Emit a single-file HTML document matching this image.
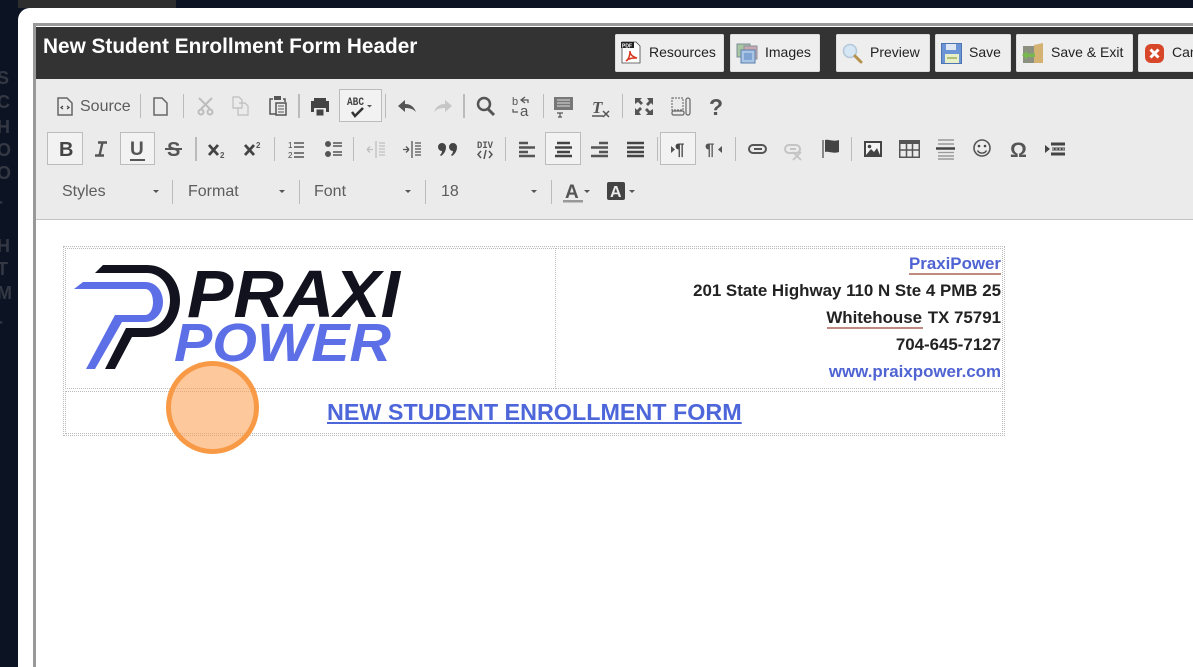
<!DOCTYPE html>
<html><head><meta charset="utf-8"><style>
html,body{margin:0;padding:0;width:1193px;height:667px;overflow:hidden;background:#0c1424;font-family:"Liberation Sans",sans-serif}
.a{position:absolute}
.t{position:absolute;white-space:nowrap;line-height:1}
.btn{position:absolute;top:34px;height:38px;background:#eee;border-radius:2px;box-shadow:inset 0 0 0 1px #ddd}
.bt{position:absolute;top:45px;font-size:14px;color:#222;line-height:1;white-space:nowrap}
.sep{position:absolute;width:1px;background:#bbb}
.box{position:absolute;background:#f2f2f2;border:1px solid #bcbcbc;box-sizing:border-box}
.l{position:absolute;left:-3px;font-size:18px;font-weight:bold;color:#343843;line-height:1}
.tb{position:absolute;font-size:16px;color:#5c5c5c;line-height:1;white-space:nowrap}
.r{position:absolute;right:192px;font-size:16.9px;font-weight:bold;color:#222;line-height:1;white-space:nowrap}
.d{position:absolute;border:1px dotted #bbb;box-sizing:border-box}
</style></head><body>
<div class="a" style="left:18px;top:0;width:158px;height:8px;background:#2e2e2e"></div>
<div class="l" style="top:69px">S</div><div class="l" style="top:93px">C</div><div class="l" style="top:118px">H</div><div class="l" style="top:141px">O</div><div class="l" style="top:164px">O</div><div class="l" style="top:192px">-</div><div class="l" style="top:237px">H</div><div class="l" style="top:260px">T</div><div class="l" style="top:284px">M</div><div class="l" style="top:312px">-</div>
<div class="a" style="left:18px;top:8px;width:1175px;height:659px;background:#fff;border-top-left-radius:12px"></div>
<div class="a" style="left:33px;top:23px;width:1160px;height:644px;background:#fff;border-left:3px solid #999;border-top:3px solid #999;box-sizing:border-box"></div>
<div class="a" style="left:36px;top:27px;width:1157px;height:52px;background:#333"></div>
<div class="t" style="left:43px;top:37px;font-size:20.8px;font-weight:bold;color:#fff">New Student Enrollment Form Header</div>

<div class="btn" style="left:615px;width:109px"></div>
<div class="btn" style="left:730px;width:90px"></div>
<div class="btn" style="left:836px;width:94px"></div>
<div class="btn" style="left:935px;width:76px"></div>
<div class="btn" style="left:1016px;width:117px"></div>
<div class="btn" style="left:1138px;width:70px"></div>
<div class="bt" style="left:649px">Resources</div>
<div class="bt" style="left:765px">Images</div>
<div class="bt" style="left:870px">Preview</div>
<div class="bt" style="left:969px">Save</div>
<div class="bt" style="left:1051px">Save &amp; Exit</div>
<div class="bt" style="left:1172px">Cancel</div>

<div class="a" style="left:36px;top:79px;width:1157px;height:141px;background:#ebebeb;border-bottom:1px solid #c4c4c4;box-sizing:border-box"></div>

<div class="box" style="left:339px;top:89px;width:43px;height:33px"></div>
<div class="box" style="left:47px;top:132px;width:36px;height:33px"></div>
<div class="box" style="left:120px;top:132px;width:35px;height:33px"></div>
<div class="box" style="left:545px;top:132px;width:36px;height:33px"></div>
<div class="box" style="left:660px;top:132px;width:36px;height:33px"></div>

<div class="tb" style="left:80px;top:99px">Source</div>
<div class="tb" style="left:62px;top:184px">Styles</div>
<div class="tb" style="left:188px;top:184px">Format</div>
<div class="tb" style="left:314px;top:184px">Font</div>
<div class="tb" style="left:441px;top:184px">18</div>

<div class="sep" style="left:140px;top:94px;height:24px"></div>
<div class="sep" style="left:183px;top:94px;height:24px"></div>
<div class="sep" style="left:298px;top:94px;height:24px;width:2px"></div>
<div class="sep" style="left:385px;top:94px;height:24px"></div>
<div class="sep" style="left:463px;top:94px;height:24px;width:2px"></div>
<div class="sep" style="left:543px;top:94px;height:24px"></div>
<div class="sep" style="left:622px;top:94px;height:24px"></div>
<div class="sep" style="left:195px;top:137px;height:24px;width:2px"></div>
<div class="sep" style="left:274px;top:137px;height:24px"></div>
<div class="sep" style="left:353px;top:137px;height:24px"></div>
<div class="sep" style="left:505px;top:137px;height:24px"></div>
<div class="sep" style="left:657px;top:137px;height:24px"></div>
<div class="sep" style="left:735px;top:137px;height:24px"></div>
<div class="sep" style="left:851px;top:137px;height:24px"></div>
<div class="sep" style="left:172px;top:180px;height:24px"></div>
<div class="sep" style="left:299px;top:180px;height:24px"></div>
<div class="sep" style="left:425px;top:180px;height:24px"></div>
<div class="sep" style="left:551px;top:180px;height:24px"></div>

<svg class="a" style="left:0;top:0" width="1193" height="230" viewBox="0 0 1193 230">
<!-- header button icons -->
<path d="M622 42h14l4 4v17h-18z" fill="#fff" stroke="#444" stroke-width=".8"/>
<rect x="621" y="42" width="13" height="6" fill="#222"/>
<text x="622" y="47.500" font-size="5" font-weight="bold" fill="#fff" font-family="Liberation Sans">PDF</text>
<path d="M626 61c3-2 4-6 4-10 0 4 3 6 7 7-4 0-8 0-11 3z" fill="none" stroke="#d8391f" stroke-width="1.500"/>
<rect x="737" y="44" width="13" height="13" fill="#a8c6a0" stroke="#7c8f9a"/>
<rect x="744" y="46" width="13" height="13" fill="#c8a8b0" stroke="#8c8f9a"/>
<rect x="741" y="50" width="14" height="13" fill="#a9c4e4" stroke="#5a7fae"/>
<rect x="744" y="53" width="8" height="7" fill="#7fa4d4"/>
<circle cx="850" cy="51" r="6.500" fill="#d5e6f5" stroke="#b4c8da" stroke-width="1.600"/>
<path d="M855 56l6 6" stroke="#b5914e" stroke-width="3" stroke-linecap="round"/>
<path d="M941.500 43.500h20v20h-20z" fill="#6b94d6" stroke="#4b74b0"/>
<rect x="946" y="44" width="10" height="6" fill="#dfe7f2"/>
<rect x="945" y="54" width="14" height="9" fill="#e7efc8"/>
<path d="M947 58h10" stroke="#9cb060" stroke-width="1.500"/>
<rect x="1023" y="46" width="14" height="17" fill="#8b9080"/>
<path d="M1034 45l9-2v20l-9 0z" fill="#d4b272"/>
<path d="M1022 55l5-4v2.500h8v3.500h-8v2.500z" fill="#78b84e"/>
<rect x="1145" y="44" width="19" height="19" rx="6" fill="#d9472b"/>
<path d="M1150.500 49.500l8 8m0-8l-8 8" stroke="#fff" stroke-width="3"/>

<!-- Row 1 -->
<g fill="none" stroke="#666" stroke-width="1.500">
<path d="M58 98h9l5 5v12H58z"/><path d="M63 106l-2 1.500 2 1.500m4-3l2 1.500-2 1.500" stroke-width="1.200" stroke="#444"/>
<path d="M154 98h8l5 5v12h-13z"/>
</g>
<g fill="none" stroke="#bdbdbd" stroke-width="2">
<path d="M199 98l11 11M212 98l-11 11"/><circle cx="201" cy="112" r="2.500"/><circle cx="210" cy="112" r="2.500"/>
<path stroke-width="1.200" d="M233 97h6l3 3v8h-9zM239 103h6l3 3v9h-10v-7"/>
</g>
<g fill="none" stroke="#555" stroke-width="1.500">
<path d="M273 99h-3v15h6"/><path d="M283 99h2v3"/><rect x="276" y="103" width="10" height="12"/>
<path d="M278 106h6M278 109h6M278 112h6" stroke-width="1"/>
</g>
<rect x="274" y="96" width="7" height="4" fill="#555"/>
<path d="M314 98h12v3h3v11h-3v-4h-12v4h-3v-11h3z" fill="#444"/><rect x="316" y="109" width="8" height="7" fill="#444" stroke="#ebebeb"/>
<text x="347" y="105" font-size="11" font-weight="bold" fill="#444" font-family="Liberation Mono" textLength="17" lengthAdjust="spacingAndGlyphs">ABC</text>
<path d="M352 112l3 4 8-8" fill="none" stroke="#333" stroke-width="2.500"/>
<path d="M367 105h5l-2.500 2.500z" fill="#555"/>
<path d="M398 106l7-6v4c6 0 9 3 11 8-3-3-6-4-11-4v4z" fill="#555"/>
<path d="M452 106l-7-6v4c-6 0-9 3-11 8 3-3 6-4 11-4v4z" fill="#c6c6c6"/>
<circle cx="484" cy="104" r="6" fill="none" stroke="#555" stroke-width="2.500"/><path d="M488 109l6 6" stroke="#555" stroke-width="3"/>
<text x="512" y="105" font-size="11" fill="#555" font-family="Liberation Sans">b</text>
<text x="520" y="116" font-size="15" fill="#555" font-family="Liberation Sans">a</text>
<path d="M521 100h7v3M525 97l-4 3 4 3M513 109v3h5" fill="none" stroke="#555" stroke-width="1.200"/>
<rect x="554" y="97" width="19" height="13" fill="#777"/>
<path d="M557 100h13M557 103h13M557 106h13" stroke="#ddd" stroke-width="1"/>
<path d="M557 113h6M560 113v4M558 117h4" stroke="#555" stroke-width="1.200" fill="none"/>
<text x="592" y="113" font-size="17" font-weight="bold" font-style="italic" fill="#555" font-family="Liberation Serif">T</text>
<path d="M592 116h11" stroke="#555" stroke-width="1.500"/><path d="M603 111l6 6m0-6l-6 6" stroke="#555" stroke-width="1.500"/>
<g fill="#555"><path d="M635 98h7l-2 2 3 3-2 2-3-3-3 2zM653 98v7l-2-2-3 3-2-2 3-3-2-3zM635 115v-7l2 2 3-3 2 2-3 3 2 3zM653 115h-7l2-2-3-3 2-2 3 3 3-2z"/></g>
<path d="M672 98h11v12h-11z" fill="none" stroke="#777" stroke-width="1.200" stroke-dasharray="2 1"/>
<rect x="672" y="111" width="12" height="4" rx="1.500" fill="none" stroke="#666" stroke-width="1.200"/>
<rect x="686" y="98" width="4" height="17" rx="2" fill="none" stroke="#666" stroke-width="1.200"/>
<text x="709" y="115" font-size="23" font-weight="bold" fill="#555" font-family="Liberation Sans">?</text>

<!-- Row 2 -->
<text x="59" y="156" font-size="20" font-weight="bold" fill="#444" font-family="Liberation Sans">B</text>
<path d="M98 142.500h9M95 155.500h9M102.500 142.500l-3 13" fill="none" stroke="#555" stroke-width="2.400"/>
<text x="130" y="155" font-size="19" font-weight="bold" fill="#555" font-family="Liberation Sans">U</text>
<rect x="130" y="159" width="15" height="2" fill="#555"/>
<text x="167" y="156" font-size="20" font-weight="bold" fill="#555" font-family="Liberation Sans">S</text>
<rect x="165" y="148" width="17" height="2" fill="#555"/>
<path d="M209 145l9 10m0-10l-9 10M245 145l9 10m0-10l-9 10" stroke="#444" stroke-width="2.800" fill="none"/>
<text x="220" y="158" font-size="8" font-weight="bold" fill="#555" font-family="Liberation Sans">2</text>
<text x="256" y="148" font-size="8" font-weight="bold" fill="#555" font-family="Liberation Sans">2</text>
<text x="288" y="148" font-size="8" fill="#444" font-family="Liberation Sans">1</text>
<text x="288" y="158" font-size="8" fill="#444" font-family="Liberation Sans">2</text>
<path d="M294 143h10M294 147h10M294 153h10M294 157h10" stroke="#555" stroke-width="1.600"/>
<circle cx="328" cy="144" r="3" fill="#555"/><circle cx="328" cy="154" r="3" fill="#555"/>
<path d="M333 143h9M333 146h9M333 152h9M333 155h9" stroke="#555" stroke-width="1.600"/>
<g stroke="#c0c0c0" stroke-width="1.300" fill="none"><path d="M376 141v17M379 143h6M379 146h6M379 149h6M379 152h6M379 155h6M367 149.500h6M367 149.500l3-3M367 149.500l3 3"/></g>
<g stroke="#555" stroke-width="1.300" fill="none"><path d="M412 141v17M415 143h6M415 146h6M415 149h6M415 152h6M415 155h6M403 149.500h6M409 149.500l-3-3M409 149.500l-3 3"/></g>
<path d="M438 147a4 4 0 0 1 8 0c0 4-2 7-5 9l-1-1c1-1 2-2 2-4a4 4 0 0 1-4-4zM449 147a4 4 0 0 1 8 0c0 4-2 7-5 9l-1-1c1-1 2-2 2-4a4 4 0 0 1-4-4z" fill="#444"/>
<text x="477" y="148" font-size="10" font-weight="bold" fill="#555" font-family="Liberation Mono" textLength="16" lengthAdjust="spacingAndGlyphs">DIV</text>
<path d="M481 151l-3 3.500 3 3.500M489 151l3 3.500-3 3.500M486 150l-2 9" stroke="#555" stroke-width="1.500" fill="none"/>
<g stroke="#555" stroke-width="2.500" fill="none">
<path d="M519 143h9M519 147.500h16M519 152h9M519 156h16"/>
<path d="M557 143h13M555 147.500h17M557 152h13M555 156h17" stroke="#444"/>
<path d="M599 143h9M591 147.500h17M599 152h9M591 156h17"/>
<path d="M627 143h17M627 147.500h17M627 152h17M627 156h17" stroke="#444"/>
</g>
<path d="M671 146l4 3.500-4 3.500z" fill="#555"/>
<text x="675" y="155" font-size="17" font-weight="bold" fill="#444" font-family="Liberation Sans">¶</text>
<text x="705" y="155" font-size="17" font-weight="bold" fill="#555" font-family="Liberation Sans">¶</text>
<path d="M722 146l-4 3.500 4 3.500z" fill="#555"/>
<rect x="749" y="145" width="17" height="8" rx="4" fill="none" stroke="#555" stroke-width="2"/><path d="M754 149h8" stroke="#555" stroke-width="2"/>
<rect x="785" y="145" width="15" height="8" rx="4" fill="none" stroke="#c4c4c4" stroke-width="2"/><path d="M790 149h6" stroke="#c4c4c4" stroke-width="2"/><path d="M793 152l8 8m0-8l-8 8" stroke="#c4c4c4" stroke-width="1.800"/>
<path d="M823 140v18" stroke="#666" stroke-width="1.500"/><path d="M825 140c4-1 8 2 14 0v12c-6 2-10-1-14 0z" fill="#444"/>
<rect x="864" y="141" width="18" height="16" fill="#444"/><rect x="866" y="143" width="14" height="12" fill="#f4f4f4"/><circle cx="869.500" cy="146.500" r="1.800" fill="#444"/><path d="M866 155l5-6 3 3 3-4 3 7z" fill="#444"/>
<rect x="899" y="140" width="21" height="18" fill="#555"/>
<path d="M900.500 144h18v12.500h-18z" fill="#ebebeb"/><path d="M906.500 144v13M912.500 144v13M900 150h19" stroke="#555" stroke-width="1.500"/>
<path d="M938 140h16M938 144h16M938 156h16M938 159h16" stroke="#888" stroke-width="1.300"/><path d="M936 148.500h19" stroke="#444" stroke-width="2.500"/><path d="M938 152.500h16" stroke="#999" stroke-width="1.300"/>
<circle cx="982" cy="148" r="8" fill="none" stroke="#555" stroke-width="1.600"/><circle cx="979" cy="146" r="1.300" fill="#444"/><circle cx="985" cy="146" r="1.300" fill="#444"/><path d="M977.500 150.500c2 3.500 7 3.500 9 0" fill="none" stroke="#444" stroke-width="1.300"/>
<text x="1010" y="157" font-size="21" font-weight="bold" fill="#555" font-family="Liberation Sans">Ω</text>
<path d="M1045 145l5 4-5 4z" fill="#444"/><path d="M1051 144h14M1052 149h13M1051 154h14" stroke="#444" stroke-width="3"/>
<path d="M1052 149h13" stroke="#ebebeb" stroke-width="1" stroke-dasharray="2 1.500"/>

<!-- Row 3 arrows -->
<g fill="#555">
<path d="M153 190h6l-3 3zM279 190h6l-3 3zM405 190h6l-3 3zM531 190h6l-3 3zM584 190h6l-3 3zM629 190h6l-3 3z"/>
</g>
<text x="565" y="198" font-size="19" font-weight="bold" fill="#555" font-family="Liberation Sans">A</text>
<rect x="563" y="200" width="20" height="2.500" fill="#999"/>
<rect x="607" y="182" width="18" height="18" rx="2" fill="#444"/>
<text x="610" y="197" font-size="16" font-weight="bold" fill="#ebebeb" font-family="Liberation Sans">A</text>
</svg>

<!-- Content table -->
<div class="d" style="left:63px;top:246px;width:942px;height:190px"></div>
<div class="d" style="left:65px;top:248px;width:491px;height:141px"></div>
<div class="d" style="left:555px;top:248px;width:448px;height:141px"></div>
<div class="d" style="left:65px;top:391px;width:938px;height:43px"></div>

<svg class="a" style="left:60px;top:255px" width="360" height="120" viewBox="60 255 360 120">
<path d="M103 265L147 265C168 265 180 283 180 300C180 320 166 337 147 337L132 337L115 369L105 369L126 328L147 328C160 328 170 316 170 300C170 285 160 273 147 273L95 273Z" fill="#13131f"/>
<path d="M83 282L145 282C156 282 163 291 163 302C163 313 155 322 145 322L122 322L95 369L86 369L115 315L145 315C150 315 153 309 153 302C153 295 150 289 145 289L74 289Z" fill="#5d6fe6"/>
<text x="187" y="317" font-size="67" font-weight="bold" font-style="italic" fill="#12121e" font-family="Liberation Sans" textLength="213" lengthAdjust="spacingAndGlyphs">PRAXI</text>
<text x="174" y="361" font-size="54" font-weight="bold" font-style="italic" fill="#5d6fe6" font-family="Liberation Sans" textLength="217" lengthAdjust="spacingAndGlyphs">POWER</text>
</svg>

<div class="r" style="top:256px;color:#4f63d2">PraxiPower</div>
<div class="a" style="left:909px;top:273px;width:92px;height:2px;background:#c08a80"></div>
<div class="r" style="top:283px">201 State Highway 110 N Ste 4 PMB 25</div>
<div class="r" style="top:310px"><span style="margin-right:1px">Whitehouse</span> TX 75791</div>
<div class="a" style="left:827px;top:327px;width:96px;height:2px;background:#c08a80"></div>
<div class="r" style="top:337px">704-645-7127</div>
<div class="r" style="top:364px;color:#4f63d2">www.praixpower.com</div>
<div class="t" style="left:327px;top:401px;font-size:23.33px;font-weight:bold;color:#4d66da;text-decoration:underline">NEW STUDENT ENROLLMENT FORM</div>

<div class="a" style="left:166px;top:361px;width:93px;height:93px;border-radius:50%;box-sizing:border-box;border:5px solid #f89a45;background:rgba(252,160,85,.58)"></div>
</body></html>
